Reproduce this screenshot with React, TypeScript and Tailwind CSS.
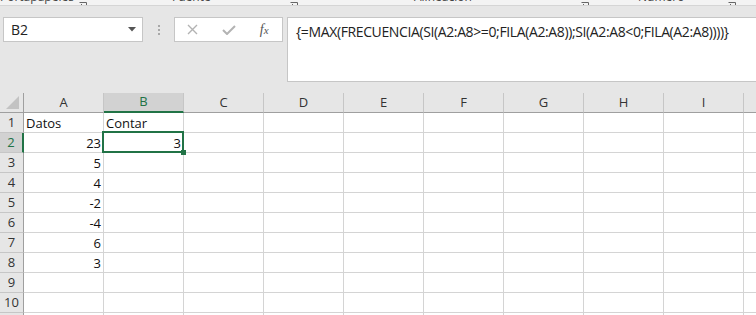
import React from "react";

const FONT = { fontFamily: '"Open Sans", "Noto Sans", sans-serif' };

const cols = ["A", "B", "C", "D", "E", "F", "G", "H", "I", "J"];

const data: Record<string, string> = {
  A1: "Datos",
  B1: "Contar",
  A2: "23",
  B2: "3",
  A3: "5",
  A4: "4",
  A5: "-2",
  A6: "-4",
  A7: "6",
  A8: "3",
};

function Launcher() {
  return (
    <svg width="8" height="8" viewBox="0 0 8 8" className="mb-[-5px]">
      <path d="M0.5 0.5 H7.5 V7.5" fill="none" stroke="#666" strokeWidth="1" />
      <path d="M2 2 L6 6 M4 6 H6 V4" fill="none" stroke="#666" strokeWidth="1" />
    </svg>
  );
}

function Group({ label, w, pl, pr }: { label: string; w: number; pl: number; pr: number }) {
  return (
    <div className="flex items-end h-full shrink-0" style={{ width: w, paddingLeft: pl, paddingRight: pr }}>
      <span className="text-[12px] leading-[12px] text-[#444] whitespace-nowrap mb-[2px]">{label}</span>
      <div className="flex-1" />
      <Launcher />
    </div>
  );
}

export default function App() {
  const rows = Array.from({ length: 11 }, (_, i) => i + 1);
  return (
    <div className="relative w-[756px] h-[315px] overflow-hidden bg-[#e6e6e6]" style={FONT}>
      {/* ribbon bottom strip */}
      <div className="h-[6px] bg-[#f3f3f3] border-b border-[#d5d5d5] flex items-end overflow-hidden">
        <Group label="Portapapeles" w={92} pl={0} pr={5} />
        <Group label="Fuente" w={210} pl={80} pr={4} />
        <Group label="Alineación" w={292} pl={112} pr={5} />
        <Group label="Número" w={148} pl={44} pr={6} />
      </div>

      {/* formula row */}
      <div className="flex items-start mt-[11px]">
        <div className="ml-[3px] w-[140px] h-[25px] bg-white border border-[#c6c6c6] flex items-center pl-[7px] pr-[6px]">
          <span className="text-[14px] leading-none text-[#222]">B2</span>
          <div className="flex-1" />
          <svg width="8" height="5" viewBox="0 0 8 5">
            <path d="M0 0 H8 L4 4.5 Z" fill="#555" />
          </svg>
        </div>
        <div className="ml-[15px] mt-[8px] flex flex-col gap-[2px]">
          <div className="w-[2px] h-[2px] bg-[#a8a8a8]" />
          <div className="w-[2px] h-[2px] bg-[#a8a8a8]" />
          <div className="w-[2px] h-[2px] bg-[#a8a8a8]" />
        </div>
        <div className="ml-[14px] w-[109px] h-[25px] bg-white border border-[#c6c6c6] flex items-center">
          <div className="w-[36px] flex justify-center">
            <svg width="11" height="11" viewBox="0 0 11 11">
              <path d="M1 1 L10 10 M10 1 L1 10" stroke="#b3b3b3" strokeWidth="1.4" fill="none" />
            </svg>
          </div>
          <div className="w-[36px] flex justify-center">
            <svg width="14" height="10" viewBox="0 0 14 10">
              <path d="M1 5 L5 9 L13 1" stroke="#b3b3b3" strokeWidth="2" fill="none" />
            </svg>
          </div>
          <div className="w-[36px] flex justify-center">
            <span
              className="text-[14px] leading-none italic text-[#555]"
              style={{ fontFamily: '"Liberation Serif", "DejaVu Serif", serif' }}
            >
              f<span className="text-[11px]">x</span>
            </span>
          </div>
        </div>
        <div className="ml-[4px] flex-1 h-[65px] bg-white border-l border-t border-b border-[#c6c6c6] pl-[8px] pt-[1px]">
          <span className="text-[14px] leading-[20px] text-[#222] whitespace-nowrap tracking-[-0.38px]">
            {"{=MAX(FRECUENCIA(SI(A2:A8>=0;FILA(A2:A8));SI(A2:A8<0;FILA(A2:A8))))}"}
          </span>
        </div>
      </div>

      {/* grid */}
      <div className="relative mt-[11px]">
        {/* header row */}
        <div className="flex h-[20px]">
          <div className="relative w-[24px] shrink-0 h-[20px] border-r border-b border-[#9f9f9f] bg-[#e6e6e6]">
            <svg width="14" height="14" viewBox="0 0 14 14" className="absolute left-[6px] top-[3px]">
              <path d="M13 0 V13 H0 Z" fill="#c3c3c3" />
            </svg>
          </div>
          {cols.map((c) => {
            const sel = c === "B";
            return (
              <div
                key={c}
                className={
                  sel
                    ? "w-[80px] shrink-0 h-[20px] bg-[#d2d2d2] border-r border-[#c6c6c6] border-b-2 border-b-[#217346] flex items-center justify-center text-[13px] text-[#217346]"
                    : "w-[80px] shrink-0 h-[20px] bg-[#e6e6e6] border-r border-[#c6c6c6] border-b border-b-[#9f9f9f] flex items-center justify-center text-[13px] text-[#333]"
                }
              >
                {c}
              </div>
            );
          })}
        </div>
        {rows.map((r) => {
          const selRow = r === 2;
          return (
            <div key={r} className="flex h-[20px]">
              <div
                className={
                  selRow
                    ? "w-[24px] shrink-0 h-[20px] bg-[#d2d2d2] border-r-2 border-r-[#217346] border-b border-b-[#c6c6c6] flex items-center justify-center text-[13px] text-[#217346] pt-[1px]"
                    : "w-[24px] shrink-0 h-[20px] bg-[#e6e6e6] border-r border-r-[#9f9f9f] border-b border-b-[#c6c6c6] flex items-center justify-center text-[13px] text-[#333] pt-[1px]"
                }
              >
                {r}
              </div>
              {cols.map((c) => {
                const v = data[`${c}${r}`];
                const isNum = v !== undefined && !isNaN(Number(v));
                return (
                  <div
                    key={c}
                    className={
                      isNum
                        ? "w-[80px] shrink-0 h-[20px] bg-white border-r border-b border-[#d4d4d4] flex items-end justify-end pr-[2px] pb-[1px] text-[13px] leading-[16px] text-[#111]"
                        : "w-[80px] shrink-0 h-[20px] bg-white border-r border-b border-[#d4d4d4] flex items-end justify-start pl-[2px] pb-[1px] text-[13px] leading-[16px] text-[#111]"
                    }
                  >
                    {v}
                  </div>
                );
              })}
            </div>
          );
        })}
        {/* selection */}
        <div className="absolute left-[102px] top-[38px] w-[82px] h-[22px] border-2 border-[#217346] pointer-events-none" />
        <div className="absolute left-[181px] top-[57px] w-[5px] h-[5px] bg-[#217346]" />
      </div>
    </div>
  );
}
